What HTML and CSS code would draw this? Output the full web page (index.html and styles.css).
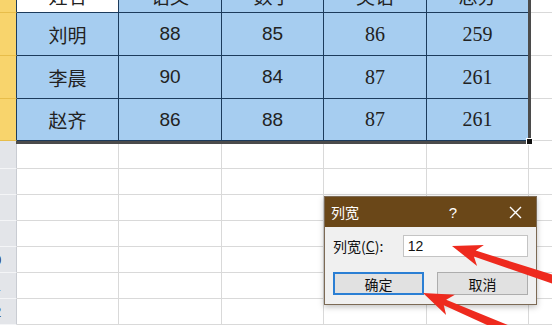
FILE: index.html
```html
<!DOCTYPE html>
<html>
<head>
<meta charset="utf-8">
<link rel="stylesheet" href="styles.css">
</head>
<body>
<div class="sheet">
  <div class="row head">
    <div class="rh sel"></div>
    <div class="c w1 t white">姓名</div>
    <div class="c w2 t">语文</div>
    <div class="c w3 t">数学</div>
    <div class="c w4 t">英语</div>
    <div class="c w5 t">总分</div>
    <div class="c w6 g"></div>
  </div>
  <div class="row data">
    <div class="rh sel"></div>
    <div class="c w1 t">刘明</div>
    <div class="c w2 t num">88</div>
    <div class="c w3 t num">85</div>
    <div class="c w4 t num2">86</div>
    <div class="c w5 t num2">259</div>
    <div class="c w6 g"></div>
  </div>
  <div class="row data">
    <div class="rh sel"></div>
    <div class="c w1 t">李晨</div>
    <div class="c w2 t num">90</div>
    <div class="c w3 t num">84</div>
    <div class="c w4 t num2">87</div>
    <div class="c w5 t num2">261</div>
    <div class="c w6 g"></div>
  </div>
  <div class="row data last">
    <div class="rh sel"></div>
    <div class="c w1 t">赵齐</div>
    <div class="c w2 t num">86</div>
    <div class="c w3 t num">88</div>
    <div class="c w4 t num2">87</div>
    <div class="c w5 t num2">261</div>
    <div class="c w6 g"></div>
  </div>
  <div class="row low first"><div class="rh"><span>6</span></div><div class="c w1 g"></div><div class="c w2 g"></div><div class="c w3 g"></div><div class="c w4 g"></div><div class="c w5 g"></div><div class="c w6 g"></div></div>
  <div class="row low"><div class="rh"><span>7</span></div><div class="c w1 g"></div><div class="c w2 g"></div><div class="c w3 g"></div><div class="c w4 g"></div><div class="c w5 g"></div><div class="c w6 g"></div></div>
  <div class="row low"><div class="rh"><span>8</span></div><div class="c w1 g"></div><div class="c w2 g"></div><div class="c w3 g"></div><div class="c w4 g"></div><div class="c w5 g"></div><div class="c w6 g"></div></div>
  <div class="row low"><div class="rh"><span>9</span></div><div class="c w1 g"></div><div class="c w2 g"></div><div class="c w3 g"></div><div class="c w4 g"></div><div class="c w5 g"></div><div class="c w6 g"></div></div>
  <div class="row low"><div class="rh"><span>10</span></div><div class="c w1 g"></div><div class="c w2 g"></div><div class="c w3 g"></div><div class="c w4 g"></div><div class="c w5 g"></div><div class="c w6 g"></div></div>
  <div class="row low"><div class="rh"><span>11</span></div><div class="c w1 g"></div><div class="c w2 g"></div><div class="c w3 g"></div><div class="c w4 g"></div><div class="c w5 g"></div><div class="c w6 g"></div></div>
  <div class="row low"><div class="rh"><span>12</span></div><div class="c w1 g"></div><div class="c w2 g"></div><div class="c w3 g"></div><div class="c w4 g"></div><div class="c w5 g"></div><div class="c w6 g"></div></div>
</div>

<div class="selection"></div>
<div class="handle"></div>

<div class="dialog">
  <div class="titlebar">
    <span class="title">列宽</span>
    <span class="help">?</span>
    <span class="close"><svg width="13" height="13" viewBox="0 0 13 13"><path d="M1 1 L12 12 M12 1 L1 12" stroke="#fff" stroke-width="1.4" fill="none"/></svg></span>
  </div>
  <div class="body">
    <div class="field">
      <span class="label">列宽(<u>C</u>):</span>
      <div class="input">12</div>
    </div>
    <div class="buttons">
      <div class="btn primary">确定</div>
      <div class="btn">取消</div>
    </div>
  </div>
</div>

<svg class="arrows" width="552" height="325" viewBox="0 0 552 325">
  <polygon fill="#ee2a1e" points="452,246 483.9,244.9 475.7,250.6 567.4,279.3 564.6,287.9 473.9,256.4 477.1,265.9"/>
  <polygon fill="#ee2a1e" points="423,293 454.9,294.8 446.2,299.7 516.6,328.6 513,336.8 443.8,305.3 446.1,315"/>
</svg>
</body>
</html>
```

FILE: styles.css
```css
html, body {
  margin: 0;
  padding: 0;
}
body {
  width: 552px;
  height: 325px;
  overflow: hidden;
  position: relative;
  background: #fff;
  font-family: "Noto Sans CJK SC", "Liberation Sans", sans-serif;
}
.sheet {
  display: flex;
  flex-direction: column;
}
.row {
  display: flex;
  flex: none;
}
.head { height: 13px; }
.data { height: 43px; }
.data.last { height: 42px; }
.low { height: 26px; }
.low.first { height: 28px; }

.rh {
  width: 17px;
  flex: none;
  box-sizing: border-box;
  overflow: hidden;
  background: #e3e5e9;
  border-right: 1px solid #c9ccd2;
  border-bottom: 1px solid #f4f5f7;
  display: flex;
  align-items: center;
}
.rh span {
  flex: none;
  width: 30px;
  margin-left: -22px;
  text-align: center;
  font-family: "Liberation Sans", sans-serif;
  font-size: 15px;
  color: #333;
}
.rh.sel {
  background: #f8d46c;
  border-right: 1px solid #1c3b5c;
  border-bottom: 1px solid #e7bd4a;
}

.c {
  box-sizing: border-box;
  flex: none;
  display: flex;
  align-items: center;
  justify-content: center;
}
.w1 { width: 102px; }
.w2 { width: 103px; }
.w3 { width: 102px; }
.w4 { width: 103px; }
.w5 { width: 102px; }
.w6 { flex: 1; }

.t {
  background: #a6cdf0;
  border-right: 1px solid #1c3b5c;
  border-bottom: 1px solid #1c3b5c;
  color: #222;
  font-size: 19px;
}
.t.white { background: #fff; }
.head .t {
  align-items: flex-end;
  line-height: 19px;
  padding-bottom: 7px;
  overflow: visible;
}
.num {
  font-family: "Liberation Sans", sans-serif;
  font-size: 19px;
}
.num2 {
  font-family: "Liberation Serif", serif;
  font-size: 20px;
}
.g {
  background: #fff;
  border-right: 1px solid #d9d9d9;
  border-bottom: 1px solid #d9d9d9;
}
.w6.g { border-right: none; }

.selection {
  position: absolute;
  left: 16px;
  top: -10px;
  width: 515px;
  height: 154px;
  box-sizing: border-box;
  border-right: 3px solid #4b4b4b;
  border-bottom: 3px solid #4b4b4b;
  pointer-events: none;
}
.handle {
  position: absolute;
  left: 526px;
  top: 138px;
  width: 5px;
  height: 5px;
  background: #111;
  border: 1px solid #fff;
}

.dialog {
  position: absolute;
  left: 324px;
  top: 196px;
  width: 213px;
  height: 109px;
  box-sizing: border-box;
  background: #f0f0f0;
  border: 1px solid #7c6a55;
  box-shadow: 0 2px 6px rgba(0,0,0,0.25);
  display: flex;
  flex-direction: column;
}
.titlebar {
  height: 30px;
  flex: none;
  background: #6a4718;
  color: #fff;
  display: flex;
  align-items: center;
  padding-left: 6px;
  font-size: 14px;
}
.title { flex: 1; }
.help {
  width: 20px;
  text-align: center;
  margin-right: 37px;
  font-family: "Liberation Sans", sans-serif;
  font-size: 15px;
}
.close {
  width: 30px;
  display: flex;
  justify-content: center;
  margin-right: 6px;
}
.body {
  display: flex;
  flex-direction: column;
  padding: 8px 8px 0 8px;
  gap: 15px;
}
.field {
  display: flex;
  align-items: center;
  height: 22px;
}
.label {
  width: 70px;
  font-size: 14px;
  color: #111;
}
.input {
  width: 126px;
  height: 22px;
  box-sizing: border-box;
  background: #fff;
  border: 1px solid #c4c4c4;
  font-family: "Liberation Sans", sans-serif;
  font-size: 14px;
  line-height: 20px;
  padding-left: 4px;
  color: #111;
}
.buttons {
  display: flex;
  gap: 13px;
}
.btn {
  width: 91px;
  height: 23px;
  box-sizing: border-box;
  background: #e1e1e1;
  border: 1px solid #adadad;
  display: flex;
  align-items: center;
  justify-content: center;
  font-size: 14px;
  color: #111;
}
.btn.primary {
  border: 2px solid #2b7fd4;
}
.arrows {
  position: absolute;
  left: 0;
  top: 0;
  pointer-events: none;
}
```
